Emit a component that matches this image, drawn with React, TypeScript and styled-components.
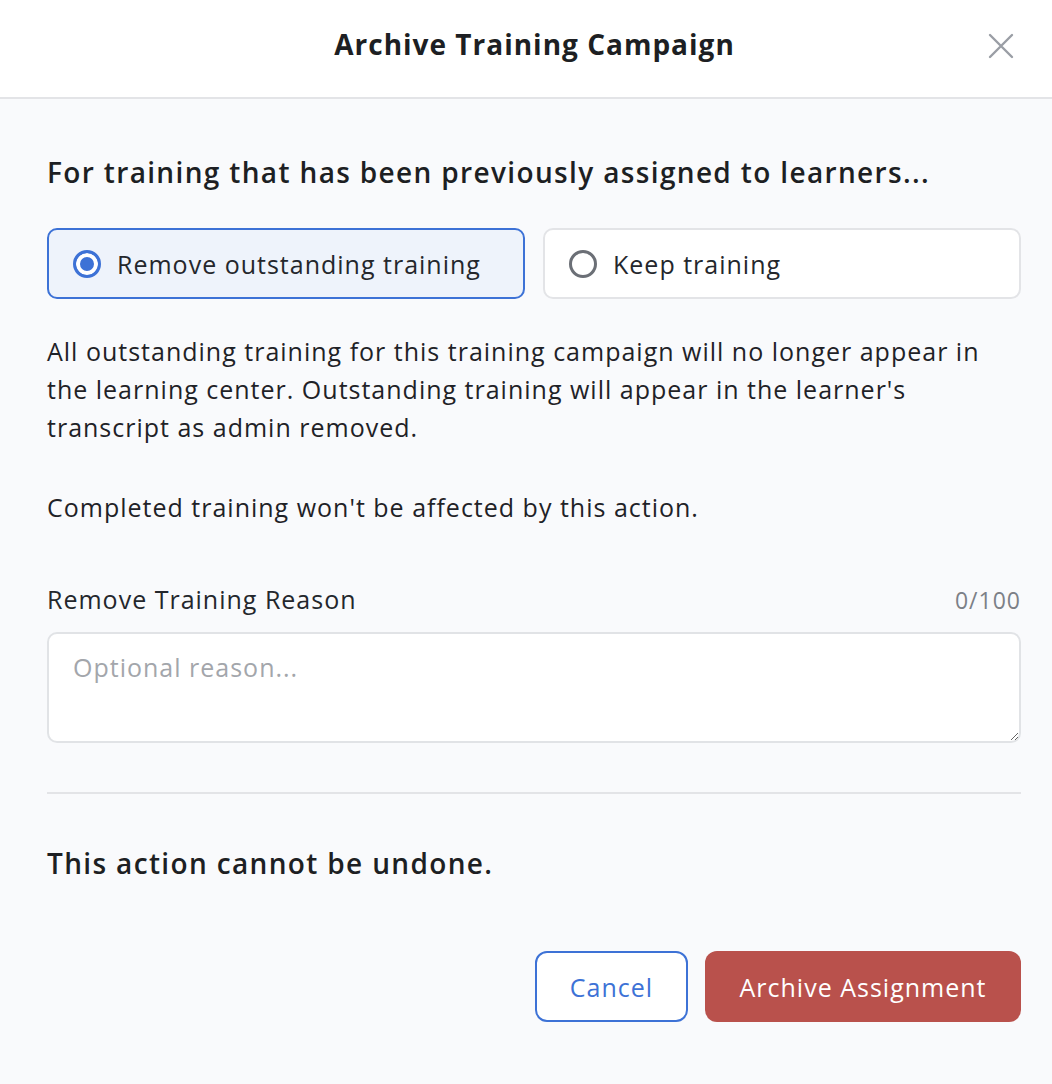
import React, { useState } from "react";
import styled, { createGlobalStyle } from "styled-components";

const GlobalStyle = createGlobalStyle`
    html, body {
        margin: 0;
        padding: 0;
        background: #f9fafc;
    }
    * {
        box-sizing: border-box;
    }
`;

type Choice = "remove" | "keep";

export default function App() {
    const [choice, setChoice] = useState<Choice>("remove");
    const [reason, setReason] = useState("");

    return (
        <>
            <GlobalStyle />
            <Modal>
                <Header>
                    <Title>Archive Training Campaign</Title>
                    <CloseButton aria-label="Close">
                        <svg width="26" height="26" viewBox="0 0 26 26" fill="none">
                            <path d="M2 2L24 24M24 2L2 24" stroke="#9a9ea5" strokeWidth="2.4" strokeLinecap="round" />
                        </svg>
                    </CloseButton>
                </Header>

                <Body>
                    <Heading>For training that has been previously assigned to learners...</Heading>

                    <Options>
                        <Option $selected={choice === "remove"} onClick={() => setChoice("remove")}>
                            <Radio $selected={choice === "remove"} />
                            Remove outstanding training
                        </Option>
                        <Option $selected={choice === "keep"} onClick={() => setChoice("keep")}>
                            <Radio $selected={choice === "keep"} />
                            Keep training
                        </Option>
                    </Options>

                    <Paragraph>
                        All outstanding training for this training campaign will no longer appear in
                        the learning center. Outstanding training will appear in the learner's
                        transcript as admin removed.
                    </Paragraph>
                    <Paragraph $gap={42}>Completed training won't be affected by this action.</Paragraph>

                    <LabelRow>
                        <Label>Remove Training Reason</Label>
                        <Counter>{reason.length}/100</Counter>
                    </LabelRow>
                    <TextArea
                        placeholder="Optional reason..."
                        maxLength={100}
                        value={reason}
                        onChange={(e) => setReason(e.target.value)}
                    />

                    <Divider />

                    <Warning>This action cannot be undone.</Warning>

                    <Actions>
                        <CancelButton>Cancel</CancelButton>
                        <ArchiveButton>Archive Assignment</ArchiveButton>
                    </Actions>
                </Body>
            </Modal>
        </>
    );
}

const Modal = styled.div`
    min-height: 1084px;
    background: #f9fafc;
    font-family: "Open Sans", "Noto Sans", sans-serif;
    color: #1f2227;
`;

const Header = styled.header`
    position: relative;
    height: 99px;
    padding-left: 17px;
    background: #ffffff;
    border-bottom: 2px solid #e3e4e7;
    display: flex;
    align-items: center;
    justify-content: center;
`;

const Title = styled.h1`
    margin: 0 0 10px;
    font-size: 28px;
    font-weight: 700;
    letter-spacing: 1px;
    color: #1d1f23;
`;

const CloseButton = styled.button`
    position: absolute;
    right: 38px;
    top: 33px;
    padding: 0;
    border: none;
    background: none;
    cursor: pointer;
    display: flex;
`;

const Body = styled.main`
    padding: 54px 31px 0 47px;
    display: flex;
    flex-direction: column;
`;

const Heading = styled.h2`
    margin: 0;
    font-size: 28px;
    font-weight: 600;
    letter-spacing: 1.35px;
    line-height: 38px;
    color: #1d1f23;
`;

const Options = styled.div`
    margin-top: 37px;
    display: grid;
    grid-template-columns: 1fr 1fr;
    gap: 18px;
`;

const Option = styled.label<{ $selected: boolean }>`
    height: 71px;
    display: flex;
    align-items: center;
    gap: 16px;
    padding: 0 24px;
    border-radius: 10px;
    border: ${(p) => (p.$selected ? "2px solid #3d72d6" : "2px solid #e3e4e7")};
    background: ${(p) => (p.$selected ? "#eef3fb" : "#ffffff")};
    font-size: 25px;
    letter-spacing: 1px;
    color: #24272c;
    cursor: pointer;
`;

const Radio = styled.span<{ $selected: boolean }>`
    width: 28px;
    height: 28px;
    flex-shrink: 0;
    border-radius: 50%;
    border: 3px solid ${(p) => (p.$selected ? "#3d72d6" : "#6b6f76")};
    background: ${(p) => (p.$selected ? "#3d72d6" : "transparent")};
    box-shadow: ${(p) => (p.$selected ? "inset 0 0 0 4px #ffffff" : "none")};
`;

const Paragraph = styled.p<{ $gap?: number }>`
    margin: ${(p) => p.$gap ?? 33}px 0 0;
    font-size: 25px;
    letter-spacing: 1px;
    line-height: 38px;
    color: #1f2227;
`;

const LabelRow = styled.div`
    margin-top: 56px;
    display: flex;
    justify-content: space-between;
    align-items: baseline;
    letter-spacing: 1px;
`;

const Label = styled.span`
    font-size: 25px;
    color: #24272c;
`;

const Counter = styled.span`
    font-size: 23px;
    color: #7c8087;
`;

const TextArea = styled.textarea`
    margin-top: 16px;
    height: 111px;
    padding: 16px 24px;
    border: 2px solid #e1e3e6;
    border-radius: 10px;
    background: #ffffff;
    font-family: inherit;
    font-size: 25px;
    letter-spacing: 1px;
    color: #24272c;
    resize: vertical;
    outline: none;

    &::placeholder {
        color: #a3a6ab;
    }
`;

const Divider = styled.hr`
    margin: 49px 0 0;
    border: none;
    border-top: 2px solid #e3e4e7;
`;

const Warning = styled.p`
    margin: 50px 0 0;
    font-size: 28px;
    font-weight: 600;
    letter-spacing: 1.35px;
    line-height: 38px;
    color: #1d1f23;
`;

const Actions = styled.div`
    margin-top: 69px;
    display: flex;
    justify-content: flex-end;
    gap: 17px;
`;

const BaseButton = styled.button`
    height: 71px;
    border-radius: 12px;
    font-family: inherit;
    font-size: 25px;
    letter-spacing: 1px;
    cursor: pointer;
`;

const CancelButton = styled(BaseButton)`
    width: 153px;
    border: 2px solid #3d72d6;
    background: #ffffff;
    color: #3d72d6;
`;

const ArchiveButton = styled(BaseButton)`
    width: 316px;
    border: none;
    background: #b9514c;
    color: #ffffff;
`;
